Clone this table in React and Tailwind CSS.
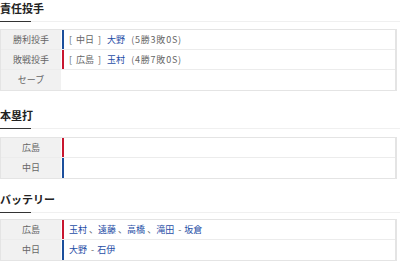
const font = { fontFamily: '"Noto Sans CJK JP", "Noto Sans", sans-serif' };

const BLUE = 'bg-[#1c4f9c]';
const RED = 'bg-[#c8162f]';

function Heading({ children }) {
  return (
    <div className="relative h-[22px] border-b border-[#f0f0f0]">
      <h3 className="text-[11px] leading-[16px] font-bold text-[#222]">{children}</h3>
      <div className="absolute left-0 bottom-[-1px] w-[31px] h-px bg-[#333]" />
    </div>
  );
}

function Row({ label, bar, children, last }) {
  return (
    <div className={`flex h-[20px] ${last ? '' : 'border-b border-[#ececec]'}`}>
      <div className="w-[60px] shrink-0 bg-[#f1f1f1] flex items-center justify-center text-[9px] text-[#666]">
        {label}
      </div>
      <div className="w-px" />
      <div className={`w-[2px] shrink-0 ${bar || ''}`} />
      <div className="flex-1 flex items-center pl-[5px] text-[9px] text-[#666] whitespace-nowrap">{children}</div>
    </div>
  );
}

function Table({ children, className }) {
  return (
    <div className={`w-[397px] border border-[#e4e4e4] border-r-2 ${className}`}>{children}</div>
  );
}

const Link = ({ children, className }) => <span className={`text-[#1f4ea6] ${className || ''}`}>{children}</span>;

function Pitcher({ team, name, record }) {
  return (
    <>
      <span>[</span>
      <span className="ml-[4px]">{team}</span>
      <span className="ml-[4px]">]</span>
      <Link className="ml-[6px]">{name}</Link>
      <span className="ml-[6px] tracking-[0.8px]">{record}</span>
    </>
  );
}

export default function App() {
  return (
    <div className="w-[400px] h-[263px] bg-white overflow-hidden" style={font}>
      <Heading>責任投手</Heading>
      <Table className="mt-[7px]">
        <Row label="勝利投手" bar={BLUE}>
          <Pitcher team="中日" name="大野" record="(5勝3敗0S)" />
        </Row>
        <Row label="敗戦投手" bar={RED}>
          <Pitcher team="広島" name="玉村" record="(4勝7敗0S)" />
        </Row>
        <Row label="セーブ" last />
      </Table>

      <div className="mt-[16px]">
        <Heading>本塁打</Heading>
      </div>
      <Table className="mt-[8px]">
        <Row label="広島" bar={RED} />
        <Row label="中日" bar={BLUE} last />
      </Table>

      <div className="mt-[12px]">
        <Heading>バッテリー</Heading>
      </div>
      <Table className="mt-[6px]">
        <Row label="広島" bar={RED}>
          <Link>玉村</Link>&nbsp;、<Link>遠藤</Link>&nbsp;、<Link>高橋</Link>&nbsp;、<Link>滝田</Link>
          <span className="ml-[4px] mr-[3px]">-</span><Link>坂倉</Link>
        </Row>
        <Row label="中日" bar={BLUE} last>
          <Link>大野</Link>
          <span className="ml-[4px] mr-[3px]">-</span><Link>石伊</Link>
        </Row>
      </Table>
    </div>
  );
}
